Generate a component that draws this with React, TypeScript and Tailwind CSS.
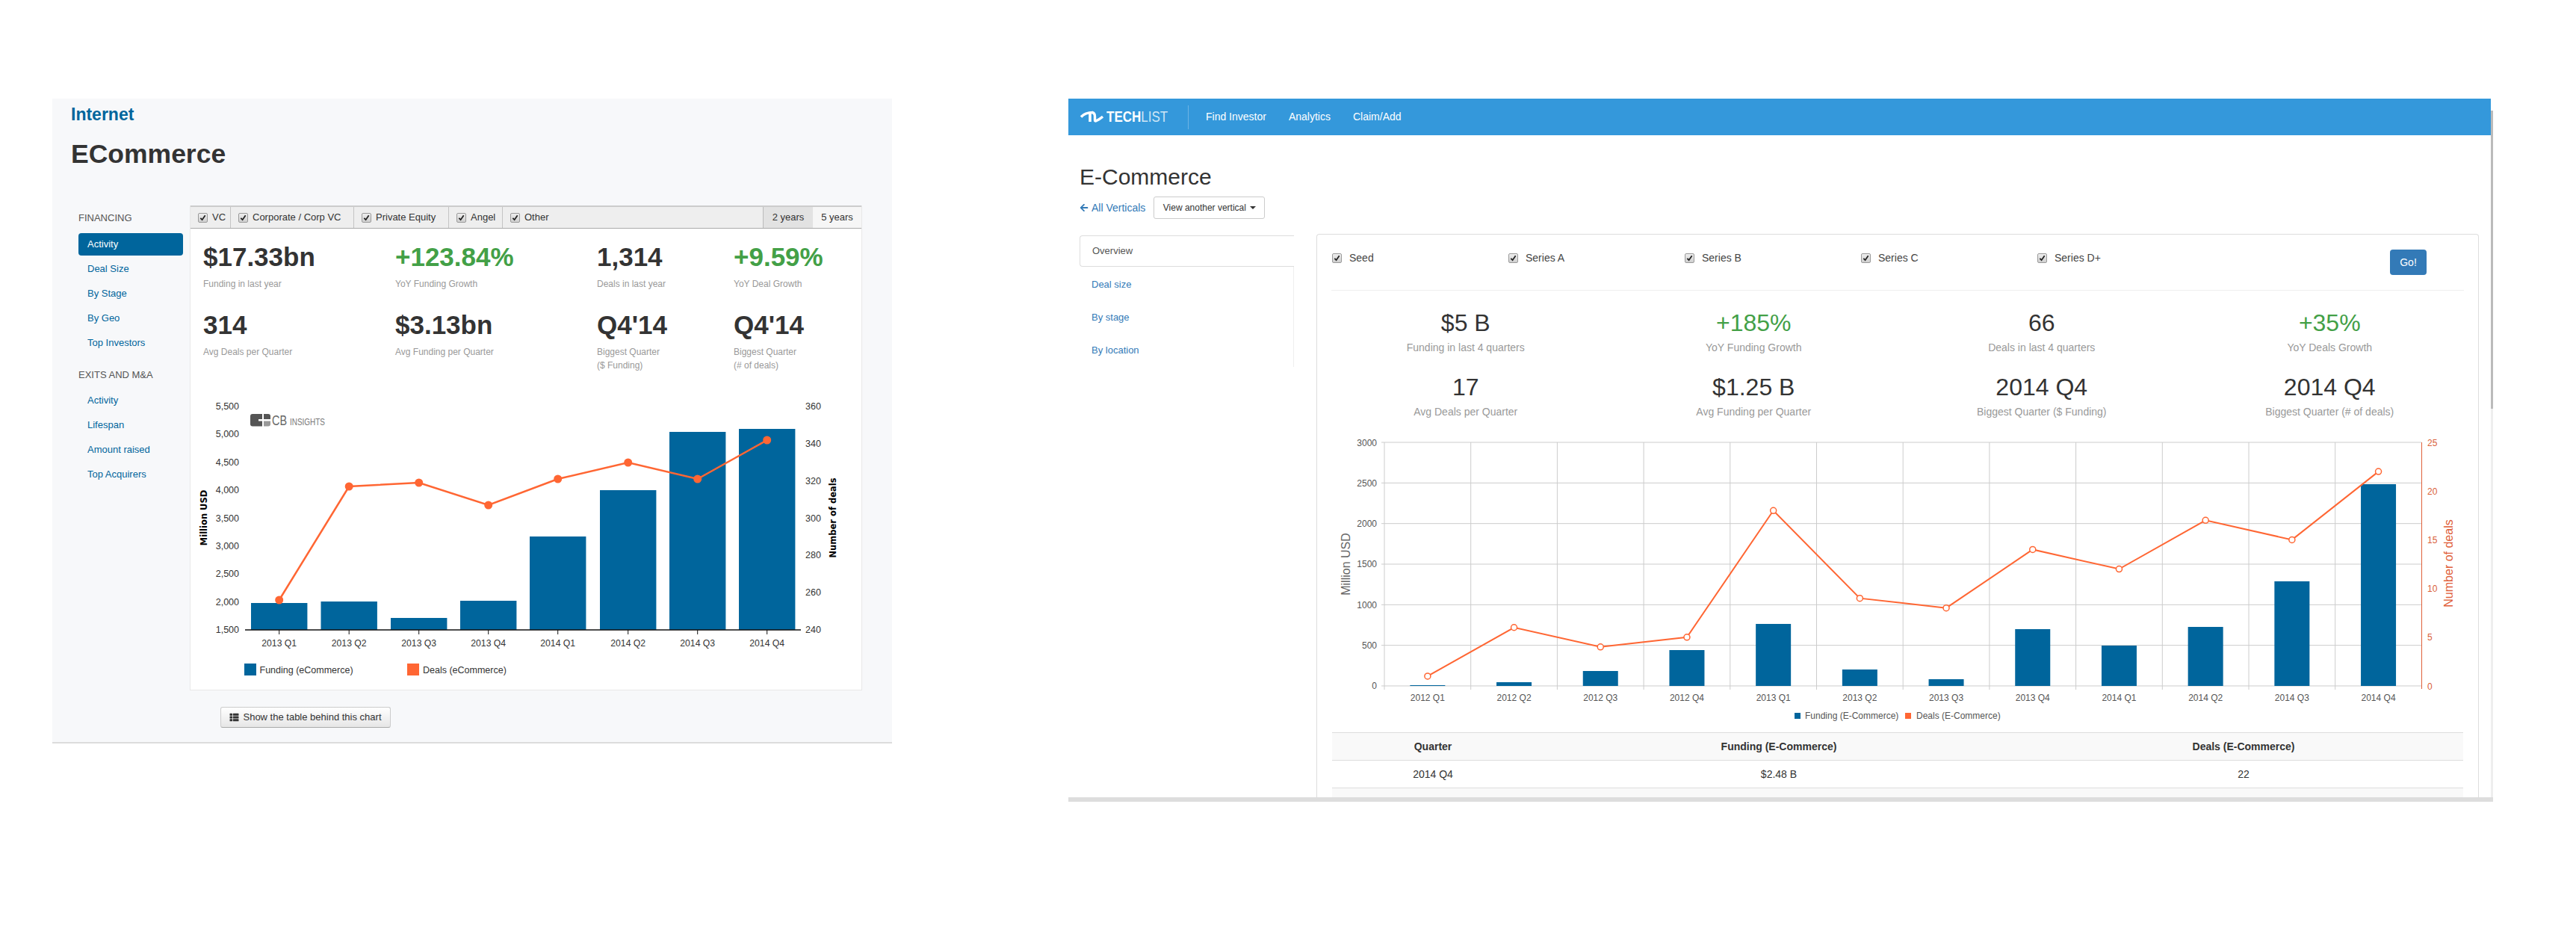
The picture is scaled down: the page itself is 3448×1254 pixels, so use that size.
import { FaArrowLeft, FaThList } from "react-icons/fa";

const font = "font-['Liberation_Sans',Arial,sans-serif]";

const leftBars = [
  { q: "2013 Q1", x: 336, top: 807 },
  { q: "2013 Q2", x: 429.5, top: 805 },
  { q: "2013 Q3", x: 523, top: 827 },
  { q: "2013 Q4", x: 616, top: 804 },
  { q: "2014 Q1", x: 709, top: 718 },
  { q: "2014 Q2", x: 803, top: 656 },
  { q: "2014 Q3", x: 896, top: 578 },
  { q: "2014 Q4", x: 989, top: 574 },
];
const leftLine = [803, 651, 646, 676, 641, 619, 641, 589];
const leftY = ["5,500", "5,000", "4,500", "4,000", "3,500", "3,000", "2,500", "2,000", "1,500"];
const leftYPos = [543, 580, 618, 655, 693, 730, 767, 805, 842];
const leftR = [
  ["360", 543],
  ["340", 593],
  ["320", 643],
  ["300", 693],
  ["280", 742],
  ["260", 792],
  ["240", 842],
] as const;

const quarters = ["2012 Q1", "2012 Q2", "2012 Q3", "2012 Q4", "2013 Q1", "2013 Q2", "2013 Q3", "2013 Q4", "2014 Q1", "2014 Q2", "2014 Q3", "2014 Q4"];
const barTops = [917, 913, 898, 870, 835, 896, 909, 842, 864, 839, 778, 648];
const deals = [1, 6, 4, 5, 18, 9, 8, 14, 12, 17, 15, 22];

function Check() {
  return (
    <span className="flex h-[13px] w-[13px] shrink-0 items-center justify-center rounded-[2px] border border-[#9a9a9a] bg-gradient-to-b from-[#eeeeee] to-[#cfcfcf]">
      <svg viewBox="0 0 10 10" className="h-[9px] w-[9px]">
        <path d="M1.5 5.5 L4 8 L8.5 1.5" fill="none" stroke="#222" strokeWidth="2" />
      </svg>
    </span>
  );
}

function Stat({ value, label, sub, green }: { value: string; label: string; sub?: string; green?: boolean }) {
  return (
    <div>
      <div className={`h-[40px] text-[35px] font-bold leading-[40px] ${green ? "text-[#43a047]" : "text-[#333]"}`}>{value}</div>
      <div className="mt-[7px] text-[12px] leading-[18px] text-[#999]">{label}</div>
      {sub && <div className="text-[12px] leading-[18px] text-[#999]">{sub}</div>}
    </div>
  );
}

function LeftChart() {
  const xs = leftBars.map((b) => b.x + 37.7);
  const line = leftLine.map((y, i) => `${xs[i]},${y}`).join(" ");
  return (
    <svg viewBox="255 520 898 400" className="mt-[22px] block h-[400px] w-[898px]" fontFamily="Liberation Sans, Arial, sans-serif">
      {/* CB Insights logo */}
      <path d="M338 554 h13 v7 h-5 v2.5 h5 v7 h-13 a3 3 0 0 1 -3 -3 v-10.5 a3 3 0 0 1 3 -3 z" fill="#555" />
      <path d="M353 554 h6 a3 3 0 0 1 3 3 v4 h-9 z" fill="#555" />
      <path d="M353 563.5 h9 v4 a3 3 0 0 1 -3 3 h-6 z" fill="#999" />
      <text x="364" y="569" fontSize="19" fill="#666" textLength="20" lengthAdjust="spacingAndGlyphs">CB</text>
      <text x="388" y="569" fontSize="12" fill="#777" textLength="47" lengthAdjust="spacingAndGlyphs">INSIGHTS</text>

      {leftBars.map((b) => (
        <rect key={b.q} x={b.x} y={b.top} width={75.4} height={843 - b.top} fill="#00659c" />
      ))}
      <line x1="328" y1="843" x2="1072" y2="843" stroke="#111" strokeWidth="1.5" />
      {xs.map((x, i) => (
        <g key={i}>
          <line x1={x} y1="843" x2={x} y2="849" stroke="#111" />
          <text x={x} y="865" fontSize="12.2" textAnchor="middle" fill="#333">{leftBars[i].q}</text>
        </g>
      ))}
      {leftY.map((t, i) => (
        <text key={t} x="320" y={leftYPos[i] + 4.5} fontSize="12.5" textAnchor="end" fill="#333">{t}</text>
      ))}
      {leftR.map(([t, y]) => (
        <text key={t} x="1078" y={y + 4.5} fontSize="12.5" fill="#333">{t}</text>
      ))}
      <polyline points={line} fill="none" stroke="#ff6633" strokeWidth="2.5" />
      {leftLine.map((y, i) => (
        <circle key={i} cx={xs[i]} cy={y} r="5.5" fill="#ff6633" />
      ))}
      <text transform="translate(277 693) rotate(-90)" fontFamily="DejaVu Sans, sans-serif" fontWeight="700" fontSize="11.5" textAnchor="middle" fill="#000">Million USD</text>
      <text transform="translate(1119 693) rotate(-90)" fontFamily="DejaVu Sans, sans-serif" fontWeight="700" fontSize="11.5" textAnchor="middle" fill="#000">Number of deals</text>
      <rect x="327" y="888" width="16" height="16" fill="#00659c" />
      <text x="347.5" y="901" fontSize="12.5" fill="#333">Funding (eCommerce)</text>
      <rect x="545" y="888" width="16" height="16" fill="#ff6633" />
      <text x="566" y="901" fontSize="12.5" fill="#333">Deals (eCommerce)</text>
    </svg>
  );
}

function RightChart() {
  const step = 115.7;
  const cx = (i: number) => 1853 + step * (i + 0.5);
  const dy = (v: number) => 918 - v * 13.04;
  const points = deals.map((d, i) => `${cx(i)},${dy(d)}`).join(" ");
  return (
    <svg viewBox="1763 580 1554 390" className="mt-[19px] block h-[390px] w-[1554px]" fontFamily="Liberation Sans, Arial, sans-serif">
      {[0, 1, 2, 3, 4, 5, 6].map((i) => (
        <g key={i}>
          <line x1="1849" y1={592 + i * 54.33} x2="3241" y2={592 + i * 54.33} stroke="#ccc" />
          <text x="1843" y={592 + i * 54.33 + 4.5} fontSize="12" textAnchor="end" fill="#555">{3000 - i * 500}</text>
        </g>
      ))}
      {quarters.map((q, i) => (
        <line key={q} x1={1853 + step * i} y1="592" x2={1853 + step * i} y2="923" stroke="#ccc" />
      ))}
      {quarters.map((q, i) => (
        <g key={q}>
          <rect x={cx(i) - 23.5} y={barTops[i]} width="47" height={918 - barTops[i]} fill="#00659c" />
          <text x={cx(i)} y="938" fontSize="12" textAnchor="middle" fill="#555">{q}</text>
        </g>
      ))}
      <line x1="3241.5" y1="592" x2="3241.5" y2="922" stroke="#e0603a" />
      {[25, 20, 15, 10, 5, 0].map((v) => (
        <text key={v} x="3249" y={dy(v) + 4.5} fontSize="12" fill="#d9603a">{v}</text>
      ))}
      <polyline points={points} fill="none" stroke="#ff6633" strokeWidth="2" />
      {deals.map((d, i) => (
        <circle key={i} cx={cx(i)} cy={dy(d)} r="4" fill="#fff" stroke="#ff6633" strokeWidth="1.5" />
      ))}
      <text transform="translate(1807 755) rotate(-90)" fontSize="16" textAnchor="middle" fill="#666">Million USD</text>
      <text transform="translate(3283 754) rotate(-90)" fontSize="16" textAnchor="middle" fill="#e0603a">Number of deals</text>
      <rect x="2402" y="954" width="8" height="8" fill="#00659c" />
      <text x="2416" y="962" fontSize="12" fill="#555">Funding (E-Commerce)</text>
      <rect x="2550" y="954" width="8" height="8" fill="#ff6633" />
      <text x="2565" y="962" fontSize="12" fill="#555">Deals (E-Commerce)</text>
    </svg>
  );
}

function CbPanel() {
  const navA = "flex h-[30px] items-center rounded-[4px] pl-[12px] text-[13px] text-[#00659c]";
  return (
    <div className="h-[863px] w-[1124px] shrink-0 border-b-2 border-[#dcdcdc] bg-[#f7f8fa] pl-[25px] pt-[8px]">
      <div className="text-[23px] font-bold leading-[26px] text-[#00659c]">Internet</div>
      <h1 className="mt-[20px] text-[35.5px] font-bold leading-[40px] text-[#333]">ECommerce</h1>

      <div className="mt-[49px] flex">
        <div className="w-[159px] shrink-0 pl-[10px] pt-[8px]">
          <div className="mb-[11px] text-[13px] leading-[18px] text-[#555]">FINANCING</div>
          <div className="flex w-[140px] flex-col gap-[3px]">
            <div className={`${navA} bg-[#00659c] font-normal text-white`}>Activity</div>
            <div className={navA}>Deal Size</div>
            <div className={navA}>By Stage</div>
            <div className={navA}>By Geo</div>
            <div className={navA}>Top Investors</div>
          </div>
          <div className="mb-[10px] mt-[19px] text-[13px] leading-[18px] text-[#555]">EXITS AND M&amp;A</div>
          <div className="flex w-[140px] flex-col gap-[3px]">
            <div className={navA}>Activity</div>
            <div className={navA}>Lifespan</div>
            <div className={navA}>Amount raised</div>
            <div className={navA}>Top Acquirers</div>
          </div>
        </div>

        <div className="h-[649px] w-[900px] shrink-0 border-x border-b border-[#e8e8e8] bg-white">
          <div className="flex h-[31px] items-stretch border-b border-t-2 border-b-[#aaa] border-t-[#ccc] bg-[#eee] text-[13px] text-[#333]">
            {[
              ["VC", "w-[54px]"],
              ["Corporate / Corp VC", "w-[165px]"],
              ["Private Equity", "w-[127px]"],
              ["Angel", "w-[72px]"],
              ["Other", "w-[348px]"],
            ].map(([t, w], i) => (
              <div key={t} className={`flex items-center gap-[6px] pl-[10px] ${w} ${i < 4 ? "border-r border-[#c4c4c4]" : ""}`}>
                <Check />
                <span>{t}</span>
              </div>
            ))}
            <div className="flex w-[67px] items-center justify-center border-l border-[#bbb] bg-[#e2e2e2]">2 years</div>
            <div className="flex flex-1 items-center justify-center bg-[#f6f6f6]">5 years</div>
          </div>
          <div className="grid grid-cols-[257px_270px_183px_1fr] grid-rows-[91px_auto] pl-[17px] pt-[18px]">
            <Stat value="$17.33bn" label="Funding in last year" />
            <Stat value="+123.84%" label="YoY Funding Growth" green />
            <Stat value="1,314" label="Deals in last year" />
            <Stat value="+9.59%" label="YoY Deal Growth" green />
            <Stat value="314" label="Avg Deals per Quarter" />
            <Stat value="$3.13bn" label="Avg Funding per Quarter" />
            <Stat value="Q4'14" label="Biggest Quarter" sub="($ Funding)" />
            <Stat value="Q4'14" label="Biggest Quarter" sub="(# of deals)" />
          </div>
          <LeftChart />
        </div>
      </div>

      <button
        type="button"
        className="ml-[200px] mt-[22px] flex h-[28px] w-[228px] items-center justify-center gap-[5px] rounded-[3px] border border-[#ccc] border-b-[#aaa] bg-gradient-to-b from-white to-[#e6e6e6] text-[13px] text-[#333]"
      >
        <FaThList className="h-[12px] w-[13px]" />
        Show the table behind this chart
      </button>
    </div>
  );
}

function TopStat({ value, label, green }: { value: string; label: string; green?: boolean }) {
  return (
    <div className="text-center">
      <div className={`text-[32px] leading-[38px] ${green ? "text-[#43a047]" : "text-[#333]"}`}>{value}</div>
      <div className="mt-[4px] text-[14px] leading-[20px] text-[#999]">{label}</div>
    </div>
  );
}

function TechListPanel() {
  const sideLink = "flex h-[44px] items-center pl-[16px] text-[13px] text-[#337ab7]";
  return (
    <div className="flex h-[941px] w-[1907px] shrink-0 flex-col">
      <div className="flex h-[49px] w-[1904px] items-center bg-[#3498db] pl-[15px] text-white">
        <svg viewBox="0 0 32 20" className="h-[20px] w-[32px]">
          <path d="M2 9.5 C6 5 10 3.5 18 3.5" fill="none" stroke="#fff" strokeWidth="3.4" />
          <path d="M14 4 L14 16" fill="none" stroke="#fff" strokeWidth="3.6" />
          <path d="M17 3.5 C20 4 20.5 6 20.5 9 L20.5 14 C20.5 16 23 15 31 9" fill="none" stroke="#fff" strokeWidth="3.4" />
        </svg>
        <span className="ml-[4px] inline-block w-[109px] origin-center scale-y-[1.2] text-[17px] leading-none">
          <b>TECH</b>
          <span className="font-normal text-[#cfe6f6]">LIST</span>
        </span>
        <span className="h-[32px] w-px bg-[#6db4e4]" />
        <nav className="ml-[23px] flex gap-[30px] text-[14px]">
          <span>Find Investor</span>
          <span>Analytics</span>
          <span>Claim/Add</span>
        </nav>
      </div>

      <div className="flex min-h-0 flex-1 flex-col overflow-hidden border-b-[6px] border-[#ddd] pl-[15px]">
        <h1 className="mt-[38px] text-[30px] leading-[36px] text-[#333]">E-Commerce</h1>
        <div className="mt-[8px] flex h-[30px] items-center">
          <FaArrowLeft className="h-[12px] w-[12px] text-[#337ab7]" />
          <span className="ml-[4px] text-[14px] text-[#337ab7]">All Verticals</span>
          <button type="button" className="ml-[11px] flex h-[30px] w-[149px] items-center justify-center gap-[5px] rounded-[3px] border border-[#ccc] bg-white text-[12px] text-[#333]">
            View another vertical
            <span className="border-x-[4px] border-t-[4px] border-x-transparent border-t-[#333]" />
          </button>
        </div>

        <div className="mt-[20px] flex min-h-0 flex-1">
          <div className="w-[317px] shrink-0 pt-[2px]">
            <div className="h-[176px] w-[287px] border-r border-[#eee]">
              <div className="-mr-px flex h-[42px] items-center rounded-l-[4px] border-y border-l border-[#ddd] bg-white pl-[16px] text-[13px] text-[#555]">Overview</div>
              <div className={`${sideLink} mt-[2px]`}>Deal size</div>
              <div className={sideLink}>By stage</div>
              <div className={sideLink}>By location</div>
            </div>
          </div>

          <div className="h-full w-[1556px] shrink-0 rounded-t-[4px] border-x border-t border-[#ddd]">
            <div className="mx-[19px] flex h-[75px] items-start border-b border-[#eee]">
              {["Seed", "Series A", "Series B", "Series C", "Series D+"].map((t) => (
                <div key={t} className="flex h-[62px] w-[236px] items-center gap-[10px] pl-px text-[14px] text-[#444]">
                  <Check />
                  {t}
                </div>
              ))}
              <button type="button" className="ml-auto mr-[50px] mt-[20px] h-[34px] w-[49px] shrink-0 rounded-[4px] bg-[#337ab7] text-[14px] text-white">Go!</button>
            </div>

            <div className="mt-[24px] grid grid-cols-4 gap-y-[24px] px-[6px]">
              <TopStat value="$5 B" label="Funding in last 4 quarters" />
              <TopStat value="+185%" label="YoY Funding Growth" green />
              <TopStat value="66" label="Deals in last 4 quarters" />
              <TopStat value="+35%" label="YoY Deals Growth" green />
              <TopStat value="17" label="Avg Deals per Quarter" />
              <TopStat value="$1.25 B" label="Avg Funding per Quarter" />
              <TopStat value="2014 Q4" label="Biggest Quarter ($ Funding)" />
              <TopStat value="2014 Q4" label="Biggest Quarter (# of deals)" />
            </div>

            <RightChart />

            <div className="mx-[20px] mt-[10px] text-[14px] text-[#333]">
              <div className="grid h-[38px] grid-cols-[270px_656px_1fr] items-center border-y border-[#ddd] bg-[#f9f9f9] text-center font-bold">
                <span>Quarter</span>
                <span>Funding (E-Commerce)</span>
                <span>Deals (E-Commerce)</span>
              </div>
              <div className="grid h-[37px] grid-cols-[270px_656px_1fr] items-center border-b border-[#ddd] text-center">
                <span>2014 Q4</span>
                <span>$2.48 B</span>
                <span>22</span>
              </div>
              <div className="h-[20px] bg-[#f9f9f9]" />
            </div>
          </div>
        </div>
      </div>
    </div>
  );
}

export default function App() {
  return (
    <div className={`${font} flex h-[1254px] w-[3448px] gap-[236px] overflow-hidden bg-white pl-[70px] pt-[132px]`}>
      <CbPanel />
      <div className="relative">
        <TechListPanel />
        {/* scrollbar of the captured window */}
        <div className="absolute right-0 top-[16px] h-[919px] w-[3px] bg-[#eee]" />
        <div className="absolute right-0 top-[16px] h-[399px] w-[3px] bg-[#bbb]" />
      </div>
    </div>
  );
}
